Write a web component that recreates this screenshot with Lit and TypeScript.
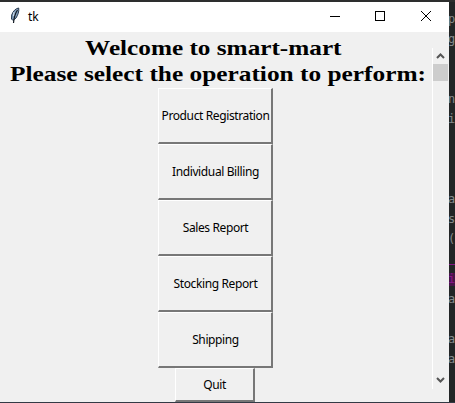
import { LitElement, html, css, svg } from "lit";
import { customElement } from "lit/decorators.js";

const operations = [
  ["Product Registration", "registration"],
  ["Individual Billing", "billing"],
  ["Sales Report", "sales"],
  ["Stocking Report", "stocking"],
  ["Shipping", "shipping"],
];

// One character of each editor line shows beside the window.
const editorLines = ["p", "g", "", "", "n", "i", "", "", "", "a", "s", "(", "", "i", "a", "", "a", "a"];

const chevron = (d: string) => svg`<path d=${d} fill="none" stroke="#555" stroke-width="2"/>`;

@customElement("app-root")
export class AppRoot extends LitElement {
  static styles = css`
    :host {
      display: block;
      width: 455px;
      height: 403px;
      overflow: hidden;
      background: #25282a;
      font-family: "Noto Sans", sans-serif;
      color: #000;
    }
    * { box-sizing: border-box; }
    .desktop {
      display: grid;
      grid-template-columns: 449px 6px;
      grid-template-rows: 2px 400px 1px;
      height: 403px;
    }
    .top { grid-column: 1 / 3; background: #2d2e2e; }
    .bottom { grid-column: 1 / 3; background: #333a45; }
    .editor {
      padding-top: 7px;
      overflow: hidden;
      background: #222526;
      color: #85898b;
      font: 12px/20px "DejaVu Sans Mono", monospace;
    }
    .line { height: 20px; margin-left: -1px; }
    .marked {
      color: #8b168b;
      background: linear-gradient(#491449, #491449) 0 4px / 100% 13px no-repeat;
    }
    .rule { background: linear-gradient(#851585, #851585) 0 15px / 100% 1px no-repeat; }
    .window {
      display: flex;
      flex-direction: column;
      overflow: hidden;
      background: #f0f0f0;
    }
    .titlebar {
      display: flex;
      flex: none;
      height: 30px;
      background: #fff;
    }
    .feather { width: 28px; height: 30px; }
    .title { flex: 1; font: 12px/29px "Noto Sans", sans-serif; }
    .controls { width: 149px; height: 30px; }
    .body { display: flex; flex: 1; min-height: 0; }
    .content {
      display: flex;
      flex-direction: column;
      align-items: center;
      width: 432px;
      padding-right: 1px;
    }
    .heading {
      display: flex;
      flex: none;
      flex-direction: column;
      align-items: center;
      height: 56px;
      padding-top: 3px;
      font: bold 22px/26px "Liberation Serif", serif;
      white-space: nowrap;
    }
    .welcome { height: 26px; transform: translateX(-2.500px) scaleX(1.147); }
    .prompt { height: 26px; transform: translateX(2.500px) scaleX(1.152); }
    .button {
      flex: none;
      width: 115px;
      height: 56px;
      margin: 0;
      padding: 0 0 0 1px;
      border: 1px solid;
      border-right-width: 2px;
      border-bottom-width: 2px;
      border-color: #fff #777 #777 #fff;
      background: #f0f0f0;
      color: #000;
      font: 12px/16px "Noto Sans", sans-serif;
      letter-spacing: -0.38px;
      white-space: nowrap;
    }
    .quit { width: 80px; height: 34px; margin-right: 2px; }
    .scrollbar {
      display: flex;
      flex-direction: column;
      width: 17px;
      height: 341px;
      margin-top: 16px;
      border-left: 1px solid #fff;
      background: #f0f0f0;
    }
    .arrow { width: 16px; height: 16px; flex: none; }
    .thumb { width: 15px; height: 17px; background: #cdcdcd; }
    .track { flex: 1; }
  `;

  render() {
    return html`
      <div class="desktop">
        <div class="top"></div>
        <div class="window">
          <div class="titlebar">
            <svg class="feather" viewBox="0 0 28 30">
              <path d="M18.700 6c-3 .4-5.600 3-7 7l-.2 4 1.500 1.500 3-2.500c1.800-2.800 3.300-6.500 2.700-10z" fill="#829dbb" stroke="#26384e" stroke-width="1"/>
              <path d="M17.500 8c-2 3-3.500 6.500-4 13" fill="none" stroke="#101820" stroke-width="1.200"/>
              <path d="M14 10l-.5 4" stroke="#d5e3ef" fill="none"/>
            </svg>
            <div class="title">tk</div>
            <svg class="controls" viewBox="300 2 149 30" fill="none" stroke="#000" shape-rendering="crispEdges">
              <path d="M330 16.500h10"/>
              <rect x="375.500" y="11.500" width="9" height="9"/>
              <path d="M421 11l10 10M431 11l-10 10" shape-rendering="auto"/>
            </svg>
          </div>
          <div class="body">
            <div class="content">
              <div class="heading">
                <div class="welcome">Welcome to smart-mart</div>
                <div class="prompt">Please select the operation to perform:</div>
              </div>
              ${operations.map(([label, name]) => html`<button class="button" name=${name}>${label}</button>`)}
              <button class="button quit">Quit</button>
            </div>
            <div class="scrollbar">
              <svg class="arrow" viewBox="0 0 16 16">${chevron("M4 10L7.500 6.500L11 10")}</svg>
              <div class="thumb"></div>
              <div class="track"></div>
              <svg class="arrow" viewBox="0 0 16 16">${chevron("M4 5L7.500 8.500L11 5")}</svg>
            </div>
          </div>
        </div>
        <div class="editor">
          ${editorLines.map((c, i) => html`<div class="line ${i === 13 ? "marked" : ""} ${i === 12 ? "rule" : ""}">${c}</div>`)}
        </div>
        <div class="bottom"></div>
      </div>
    `;
  }
}
